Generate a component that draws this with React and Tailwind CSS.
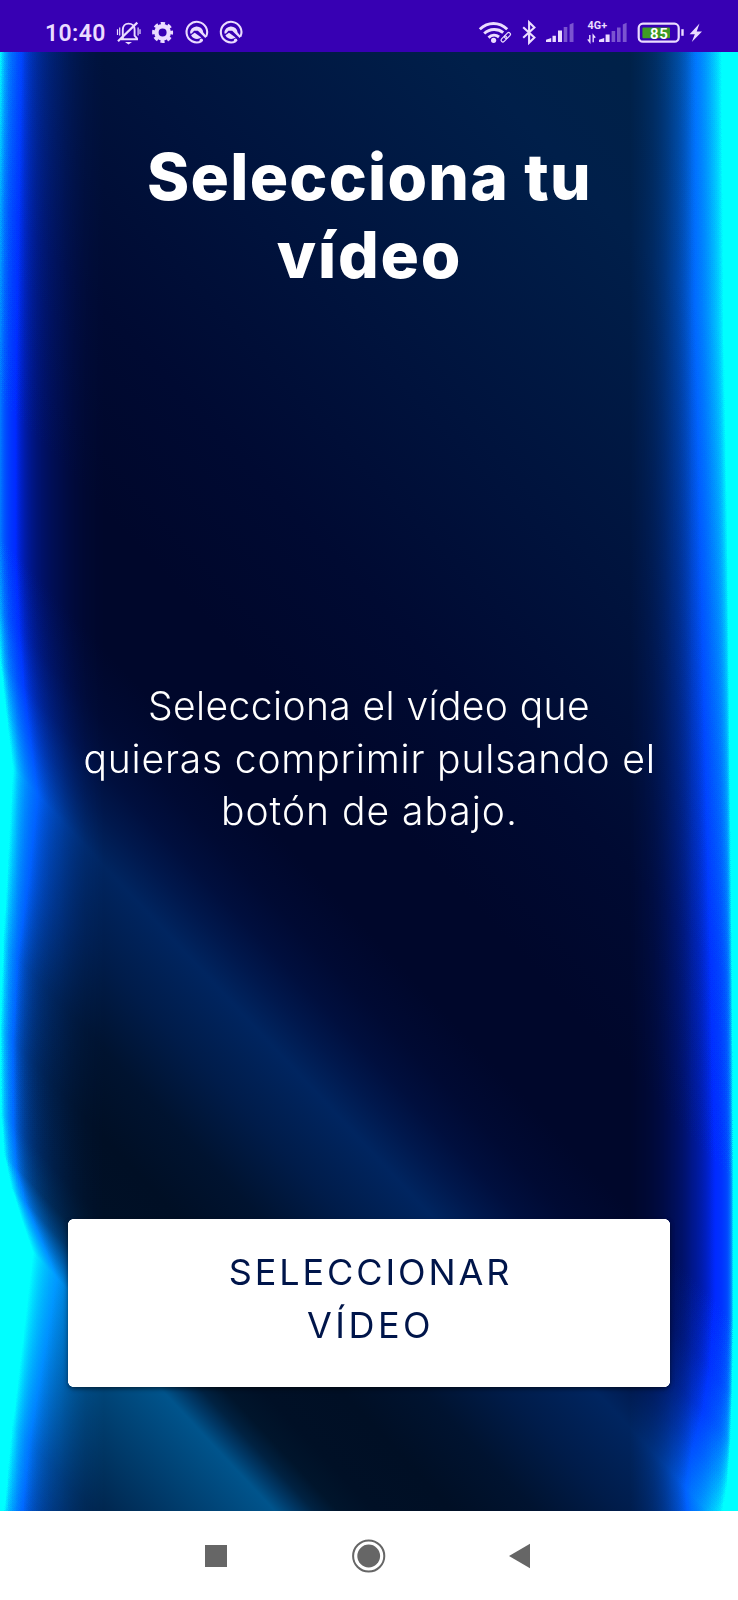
const LIGHT = '#ebdcff';

function LeftIcons() {
  return (
    <svg width="132" height="30" viewBox="114 17 132 30" fill="none" stroke={LIGHT}>
      <g strokeWidth="1.9">
        <path d="M121 39.2h17M122.8 38.8v-9.1c0-3.6 2.2-6.1 5.7-6.1s6.1 2.5 6.1 6.1v6l2.6 2.9" />
        <path d="M118 41.2l19.3-18.6" strokeWidth="2.2" />
        <path d="M117.5 29.2v5.8M119.7 27.4v8M138.1 27.4v8M140 29.2v4.8" strokeWidth="1.2" />
        <path d="M125 42h7l-3.5 2.4z" fill={LIGHT} stroke="none" />
      </g>
      <g>
        <circle cx="162.6" cy="32.4" r="6.2" strokeWidth="4.4" />
        <circle cx="162.6" cy="32.4" r="9" strokeWidth="3" strokeDasharray="4.2 2.87" strokeDashoffset="2.1" />
      </g>
      {[196.7, 231].map((x) => (
        <g key={x} transform={`translate(${x} 32)`}>
          <path d="M4.6 9.4A10.3 10.3 0 1 1 9.4 4.6" strokeWidth="2.1" />
          <path d="M-6.6 1.4A6.6 6.6 0 0 1 6.6 .6L10 4.6 8.6 6 1.2-1.2-2.6-1.2-5 1.6Z" fill={LIGHT} stroke="none" />
          <path d="M-5.6 3.2L-2 .8 4.6 5.6C1.4 8-3.6 7.4-5.6 3.2Z" fill={LIGHT} stroke="none" />
          <circle cx="4.6" cy="8.2" r="1.7" fill={LIGHT} stroke="none" />
        </g>
      ))}
    </svg>
  );
}

function RightIcons() {
  return (
    <svg width="230" height="30" viewBox="476 17 230 30" fill="none" stroke={LIGHT}>
      <g strokeWidth="2.9">
        <path d="M479.8 29.3C488 21.5 499 21.5 507.2 29.3" />
        <path d="M484.2 33.5C490 28.3 498 28.3 503.2 32.6" />
        <path d="M488.5 37.6C491.8 34.6 496 34.6 499 37" />
        <circle cx="493.6" cy="40.3" r="2.6" fill={LIGHT} stroke="none" />
        <g strokeWidth="1.2">
          <rect x="-3.4" y="-1.8" width="6.8" height="3.6" rx="1.8" transform="translate(507.5 35.5) rotate(-45)" />
          <rect x="-3.4" y="-1.8" width="6.8" height="3.6" rx="1.8" transform="translate(504 39) rotate(-45)" />
        </g>
      </g>
      <path d="M523.2 27.2l11.2 10.3-5.3 5.2V22.3l5.3 5.1-11.2 10.3" strokeWidth="2.1" />
      <g fill={LIGHT} stroke="none">
        <path d="M546 42v-2.3l5.2-1.6V42zM552.5 42v-6.3h3.4V42zM558 42V30.4h4V42z" />
        <path opacity=".38" d="M563.7 42V27h3.6v15zM569.6 42V24.5l3.9-1.8V42z" />
        <path d="M599 42v-2.3l5.2-1.6V42zM605.6 42v-7.5h4V42z" />
        <path opacity=".38" d="M611.6 42V31h3.6v11zM617 42V27.5h3.6V42zM622.8 42V24.5l3.8-1.8V42z" />
      </g>
      <path d="M589.8 35v7l-2-2.6M593.2 42.2v-7l2 2.6" strokeWidth="1.4" />
      <text x="587.6" y="29.3" fill={LIGHT} stroke="none" fontFamily="Roboto, sans-serif" fontWeight="700" fontSize="10.8" textLength="19.5">4G+</text>
      <rect x="638.7" y="23.7" width="40" height="18" rx="4.2" strokeWidth="2.2" />
      <rect x="642.4" y="27.6" width="27.6" height="10.6" rx="1" fill="#3f9a24" stroke="none" />
      <path d="M682.5 29.2v6.6" strokeWidth="2.4" />
      <text x="650" y="38.8" fill="#fff" stroke="none" fontFamily="Roboto, sans-serif" fontWeight="600" fontSize="15" textLength="17.8">85</text>
      <path d="M699.5 23.6L689.6 34.2h5.2L691.8 42 702 31.6h-5.3z" fill={LIGHT} stroke="none" />
    </svg>
  );
}

export default function App() {
  return (
    <div className="flex h-[1600px] w-[738px] flex-col overflow-hidden bg-white">
      <header className="flex h-[52px] shrink-0 items-end bg-[#3700b3] pb-[5px] pl-[45px] pr-8">
        <span className="w-[69px] whitespace-nowrap font-['Roboto',sans-serif] text-[23px] font-semibold leading-[27px] tracking-[0.4px] text-[#ebdcff]">10:40</span>
        <LeftIcons />
        <div className="grow" />
        <RightIcons />
      </header>

      <main className="isolate grid h-[1459px] shrink-0 bg-[linear-gradient(226.9deg,rgb(0,35,72)_0px,rgb(0,31,74)_203px,rgb(0,18,60)_470px,rgb(0,10,50)_640px,rgb(0,7,43)_777px,rgb(0,7,43)_870px,rgb(0,10,51)_920px,rgb(0,15,62)_955px,rgb(0,24,77)_985px,rgb(0,37,96)_1019px,rgb(0,28,74)_1084px,rgb(0,19,48)_1145px,rgb(0,15,37)_1205px,rgb(0,16,38)_1262px,rgb(0,21,44)_1289px,rgb(0,34,66)_1306px,rgb(0,56,102)_1320px,rgb(0,84,140)_1335px,rgb(0,66,116)_1385px,rgb(0,36,76)_1467px,rgb(0,20,54)_1536px)]">
        <div className="col-start-1 row-start-1 mix-blend-color-dodge bg-[linear-gradient(90deg,rgb(241,241,241)_0px,rgb(233,233,233)_5px,rgb(214,214,214)_15px,rgb(171,171,171)_33px,rgb(143,143,143)_45px,rgb(108,108,108)_60px,rgb(74,74,74)_72px,rgb(34,34,34)_86px,rgb(0,0,0)_104px,rgb(0,0,0)_630px,rgb(60,60,60)_652px,rgb(125,125,125)_672px,rgb(176,176,176)_692px,rgb(208,208,208)_712px,rgb(218,218,218)_720px,rgb(230,230,230)_727px,rgb(248,248,248)_733px,rgb(254,254,254)_738px)]" />
        <div className="col-start-1 row-start-1 flex flex-col items-center font-['Inter',sans-serif] text-white">
          <h1 className="mt-[86px] flex flex-col items-center whitespace-nowrap text-[64px] font-extrabold leading-[78px]">
            <span className="-mr-px tracking-[1.25px]">Selecciona tu</span>
            <span className="-mr-px tracking-[1.8px]">vídeo</span>
          </h1>
          <p className="mt-[386px] flex flex-col items-center whitespace-nowrap text-[39px] font-light leading-[52.5px]">
            <span className="tracking-[0.4px]">Selecciona el vídeo que</span>
            <span className="-mr-px tracking-[0.83px]">quieras comprimir pulsando el</span>
            <span className="-mr-px tracking-[1px]">botón de abajo.</span>
          </p>
          <button className="mt-auto mb-[124px] flex h-[168px] w-[602px] flex-col items-center justify-center whitespace-nowrap rounded-md bg-white pb-2 text-[36px] leading-[53px] text-[#00154a] shadow-[0_2px_4px_rgba(0,0,0,0.5)]">
            <span className="-mr-[3px] tracking-[2.9px]">SELECCIONAR</span>
            <span className="-mr-[3px] tracking-[3.5px]">VÍDEO</span>
          </button>
        </div>
      </main>

      <nav className="flex grow items-center justify-center bg-white">
        <svg width="330" height="40" viewBox="204 1536 330 40" fill="#666">
          <rect x="205" y="1545" width="22" height="22" />
          <circle cx="368.7" cy="1556" r="11.4" />
          <circle cx="368.7" cy="1556" r="15.6" fill="none" stroke="#666" strokeWidth="2" />
          <path d="M509 1556l21-12.3v24.6z" />
        </svg>
      </nav>
    </div>
  );
}
